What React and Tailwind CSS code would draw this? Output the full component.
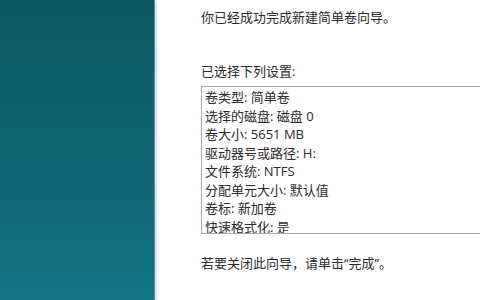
import React from 'react';

const settings = [
  '卷类型: 简单卷',
  '选择的磁盘: 磁盘 0',
  '卷大小: 5651 MB',
  '驱动器号或路径: H:',
  '文件系统: NTFS',
  '分配单元大小: 默认值',
  '卷标: 新加卷',
  '快速格式化: 是',
];

const App = () => {
  return (
    <div
      className="flex w-[480px] h-[300px] overflow-hidden bg-white text-[#2a2a2a]"
      style={{ fontFamily: '"Open Sans", "Noto Sans CJK SC", sans-serif' }}
    >
      {/* left wizard banner */}
      <div className="w-[155px] shrink-0 bg-gradient-to-b from-[#0b5862] via-[#0f6470] to-[#137482] border-r border-[#4f8fa4] shadow-[2px_0_3px_rgba(0,0,0,0.15)]" />

      {/* content */}
      <div className="flex-1 pl-[46px] pt-[8px] text-[13px] leading-[18px] overflow-hidden">
        <p>你已经成功完成新建简单卷向导。</p>
        <p className="mt-[36px]">已选择下列设置:</p>
        <div className="mt-[6px] w-[300px] h-[148px] border border-[#a9a9a9] pl-[3px] pt-[1px] overflow-hidden">
          {settings.map((s) => (
            <div key={s} className="leading-[18.5px]">{s}</div>
          ))}
        </div>
        <p className="mt-[20px]">若要关闭此向导，请单击“完成”。</p>
      </div>
    </div>
  );
};

export default App;
